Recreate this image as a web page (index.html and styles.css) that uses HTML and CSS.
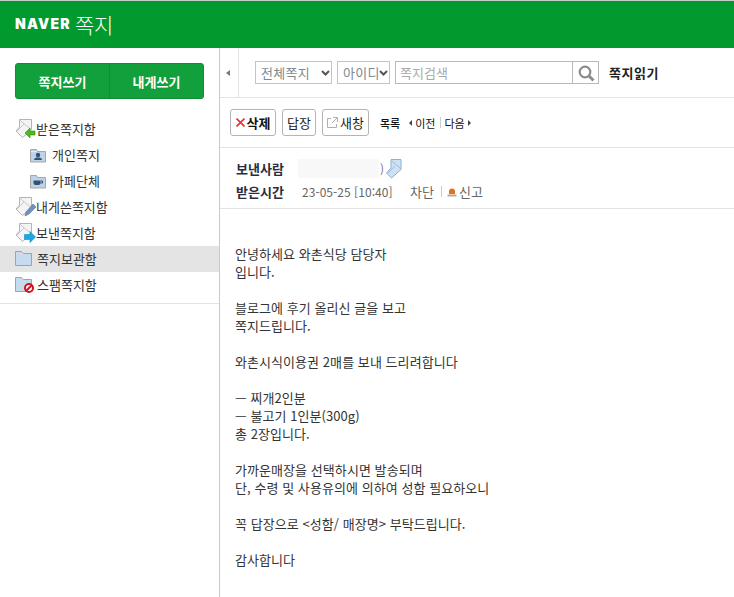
FILE: index.html
```html
<!DOCTYPE html>
<html lang="ko">
<head>
<meta charset="utf-8">
<title>NAVER 쪽지</title>
<link rel="stylesheet" href="styles.css">
</head>
<body>
<div class="page">
  <header class="header">
    <span class="logo">NAVER</span>
    <span class="service">쪽지</span>
  </header>
  <div class="main">
    <aside class="side">
      <div class="compose">
        <a class="compose-btn">쪽지쓰기</a>
        <a class="compose-btn">내게쓰기</a>
      </div>
      <ul class="folders">
        <li class="folder">
          <svg class="ico" width="21" height="22" viewBox="0 0 21 22">
            <path d="M4.500 1.500h12v10L7.500 19.500 1 13l3.500-4z" fill="#f4f4f4" stroke="#b4b4b4"/><path d="M4.500 2l11 9M2 13l7-7" stroke="#c8c8c8" fill="none"/>
            <path d="M10 15l5-5v3h5v4h-5v3z" fill="#4fb81b" stroke="#2f8f10" stroke-width=".6"/>
          </svg>
          <span class="lab">받은쪽지함</span>
        </li>
        <li class="folder sub">
          <svg class="ico-s" width="16" height="15" viewBox="0 0 16 15">
            <path d="M.5 14V1.500h6l1 2h8v10.500z" fill="#bcd3ea" stroke="#a6a6a6"/><path d="M1 3.500h6" stroke="#e8e8e8"/>
            <circle cx="8" cy="7" r="2.200" fill="#39506e"/><path d="M4 12c0-2 2-2.500 4-2.500s4 .5 4 2.500z" fill="#39506e"/>
          </svg>
          <span class="lab">개인쪽지</span>
        </li>
        <li class="folder sub">
          <svg class="ico-s" width="16" height="15" viewBox="0 0 16 15">
            <path d="M.5 14V1.500h6l1 2h8v10.500z" fill="#bcd3ea" stroke="#a6a6a6"/>
            <path d="M3.500 6.500h7v2.500q0 2-2 2h-3q-2 0-2-2z" fill="#39506e"/><path d="M10.500 7h2v2h-2" fill="none" stroke="#39506e"/>
          </svg>
          <span class="lab">카페단체</span>
        </li>
        <li class="folder">
          <svg class="ico" width="21" height="22" viewBox="0 0 21 22">
            <path d="M4.500 1.500h12v10L7.500 19.500 1 13l3.500-4z" fill="#f4f4f4" stroke="#b4b4b4"/><path d="M4.500 2l11 9M2 13l7-7" stroke="#c8c8c8" fill="none"/>
            <path d="M10 20l1-4 7-8 3 3-7 7z" fill="#6f93c4" stroke="#4d6f9f" stroke-width=".6"/>
          </svg>
          <span class="lab">내게쓴쪽지함</span>
        </li>
        <li class="folder">
          <svg class="ico" width="21" height="22" viewBox="0 0 21 22">
            <path d="M4.500 1.500h12v10L7.500 19.500 1 13l3.500-4z" fill="#f4f4f4" stroke="#b4b4b4"/><path d="M4.500 2l11 9M2 13l7-7" stroke="#c8c8c8" fill="none"/>
            <path d="M20.500 15L15 9.500v3H9.500v5H15v3z" fill="#1ca7e4" stroke="#1389c0" stroke-width=".6"/>
          </svg>
          <span class="lab">보낸쪽지함</span>
        </li>
        <li class="folder active">
          <svg class="ico" width="21" height="22" viewBox="0 0 21 22">
            <path d="M.500 17.500V3.500h6l2 2h8v12z" fill="#c6daf0" stroke="#a3a3a3"/><path d="M1 6h7" stroke="#dedede"/>
          </svg>
          <span class="lab wide">쪽지보관함</span>
        </li>
        <li class="folder">
          <svg class="ico" width="21" height="22" viewBox="0 0 21 22">
            <path d="M.500 17.500V3.500h6l2 2h8v12z" fill="#c6daf0" stroke="#a3a3a3"/>
            <circle cx="14" cy="14" r="4" fill="#fff" stroke="#d7121c" stroke-width="2"/><path d="M11 17l6-6" stroke="#d7121c" stroke-width="2"/>
          </svg>
          <span class="lab wide">스팸쪽지함</span>
        </li>
      </ul>
    </aside>
    <main class="content">
      <div class="searchbar">
        <div class="fold"><span class="fold-arrow"></span></div>
        <div class="search">
          <select class="sel sel-a"><option>전체쪽지</option></select>
          <select class="sel sel-b"><option>아이디</option></select>
          <div class="searchbox">
            <input class="q" placeholder="쪽지검색">
            <span class="go">
              <svg width="18" height="18" viewBox="0 0 18 18"><circle cx="8" cy="8" r="5.300" fill="none" stroke="#8c8c8c" stroke-width="2.200"/><path d="M12 12l4.500 4.500" stroke="#8c8c8c" stroke-width="3"/></svg>
            </span>
          </div>
          <strong class="pagetitle">쪽지읽기</strong>
        </div>
      </div>
      <div class="actions">
        <button class="btn btn-del"><svg width="9" height="9" viewBox="0 0 9 9"><path d="M.5.5l8 8M8.500.5l-8 8" stroke="#ee3030" stroke-width="1.600"/></svg>삭제</button>
        <button class="btn btn-reply">답장</button>
        <button class="btn btn-new"><svg width="11" height="11" viewBox="0 0 11 11"><path d="M4 1.500H.5v9h9V7M6 .5h4.500V5M10 1L5 6" fill="none" stroke="#b0b0b0"/></svg>새창</button>
        <nav class="nav">
          <a class="nav-list">목록</a>
          <a class="nav-item"><span class="tri-l"></span>이전</a>
          <span class="nav-sep"></span>
          <a class="nav-item">다음<span class="tri-r"></span></a>
        </nav>
      </div>
      <div class="meta">
        <div class="meta-row">
          <span class="meta-k">보낸사람</span>
          <span class="mask"></span><span class="paren">)</span>
          <svg class="sender-ico" width="17" height="20" viewBox="0 0 17 20"><path d="M5 .500h10v10L5.500 19 .5 14 5 9z" fill="#cfe0f2" stroke="#8fb0d3"/><path d="M5 1l10 9M2 14l7-7" stroke="#9fbcdb" fill="none"/></svg>
        </div>
        <div class="meta-row">
          <span class="meta-k">받은시간</span>
          <span class="date">23-05-25 [10:40]</span>
          <a class="block">차단</a>
          <span class="meta-sep"></span>
          <svg width="10" height="10" viewBox="0 0 10 10"><path d="M2 7V4.500a3 3 0 0 1 6 0V7z" fill="#e2711c"/><path d="M.5 7.500h9v2h-9z" fill="#b8a98c"/></svg>
          <a class="report">신고</a>
        </div>
      </div>
      <div class="body">
        <p>안녕하세요 와촌식당 담당자<br>입니다.</p>
        <p>블로그에 후기 올리신 글을 보고<br>쪽지드립니다.</p>
        <p>와촌시식이용권 2매를 보내 드리려합니다</p>
        <p>— 찌개2인분<br>— 불고기 1인분(300g)<br>총 2장입니다.</p>
        <p>가까운매장을 선택하시면 발송되며<br>단, 수령 및 사용유의에 의하여 성함 필요하오니</p>
        <p>꼭 답장으로 &lt;성함/ 매장명&gt; 부탁드립니다.</p>
        <p>감사합니다</p>
      </div>
    </main>
  </div>
</div>
</body>
</html>
```

FILE: styles.css
```css
* { box-sizing: border-box; }
html, body { margin: 0; padding: 0; background: #fff; }
body { font-family: "Noto Sans CJK KR", "Liberation Sans", sans-serif; font-size: 12px; color: #333; }
.page { width: 734px; height: 597px; overflow: hidden; display: flex; flex-direction: column; }

.header { height: 48px; flex: none; background: #009a2f; border-top: 1px solid #c9c9c9; display: flex; align-items: center; padding: 0 0 2px 15px; color: #fff; }
.logo { font-family: Inter, "Liberation Sans", sans-serif; font-weight: 900; font-size: 14px; letter-spacing: 1.2px; width: 60px; }
.service { font-size: 21px; font-weight: 300; line-height: 26px; letter-spacing: -.4px; }

.main { flex: 1; display: flex; min-height: 0; }
.side { width: 220px; flex: none; border-right: 1px solid #c9c9c9; }

.compose { margin: 15px 0 0 15px; width: 189px; height: 36px; display: flex; background: #12a03c; border: 1px solid #0b8f32; border-radius: 3px; }
.compose-btn { flex: 1; display: flex; align-items: center; justify-content: center; color: #fff; font-weight: 700; font-size: 13px; }
.compose-btn + .compose-btn { border-left: 1px solid #0b8f32; }

.folders { list-style: none; margin: 17px 0 0; padding: 0 0 5px; border-bottom: 1px solid #e3e3e3; }
.folder { height: 26px; display: flex; align-items: center; padding-left: 15px; font-size: 13px; color: #333; }
.folder.sub { padding-left: 30px; }
.folder.active { background: #e4e4e4; }
.ico { flex: none; }
.ico-s { flex: none; margin-right: 6px; }
.lab { line-height: 26px; }
.sub .lab { margin-top: -1px; }
.lab.wide { margin-left: 1px; }

.content { flex: 1; min-width: 0; display: flex; flex-direction: column; }

.searchbar { height: 50px; flex: none; display: flex; border-bottom: 1px solid #e3e3e3; }
.fold { width: 19px; flex: none; border-right: 1px solid #e3e3e3; display: flex; align-items: center; justify-content: center; }
.fold-arrow { width: 0; height: 0; border: 3.500px solid transparent; border-right: 4px solid #777; border-left: 0; margin-right: 2px; }
.search { flex: 1; display: flex; align-items: center; padding-left: 16px; }
.sel { height: 23px; border: 1px solid #c4c4c4; background: #fff url("data:image/svg+xml,%3Csvg xmlns='http://www.w3.org/2000/svg' width='9' height='6'%3E%3Cpath d='M1 1l3.500 3.500L8 1' fill='none' stroke='%23555' stroke-width='2'/%3E%3C/svg%3E") no-repeat right 1px center; appearance: none; font-family: "Noto Sans CJK KR", sans-serif; font-size: 13px; letter-spacing: .3px; color: #7d8a90; padding: 0 0 0 5px; border-radius: 0; margin: 0 5px 0 0; }
.sel-a { width: 77px; }
.sel-b { width: 53px; }
.searchbox { width: 204px; height: 23px; display: flex; border: 1px solid #b9b9b9; }
.q { flex: 1; min-width: 0; border: 0; outline: 0; padding: 0 4px; font-family: "Noto Sans CJK KR", sans-serif; font-size: 13px; background: #fff; }
.q::placeholder { color: #aaa; opacity: 1; }
.go { width: 26px; flex: none; border-left: 1px solid #b9b9b9; display: flex; align-items: center; justify-content: center; }
.pagetitle { margin-left: 10px; font-size: 13px; font-weight: 700; letter-spacing: .5px; color: #222; }

.actions { height: 50px; flex: none; border-bottom: 1px solid #e3e3e3; display: flex; align-items: center; padding: 0 0 0 10px; }
.btn { height: 27px; border: 1px solid #b4b4b4; border-radius: 3px; background: #fff; display: flex; align-items: center; justify-content: center; gap: 2px; font-family: "Noto Sans CJK KR", sans-serif; font-size: 13px; color: #222; padding: 0; margin: 0 6px 0 0; }
.btn-del { width: 46px; font-weight: 700; color: #111; }
.btn-reply { width: 34px; }
.btn-new { width: 47px; }
.nav { display: flex; align-items: center; margin-left: 5px; color: #111; font-size: 11px; }
.nav-list { margin-right: 9px; font-weight: 500; }
.nav-item { display: flex; align-items: center; gap: 3px; }
.nav-sep { width: 1px; height: 11px; background: #ccc; margin: 0 4px; }
.tri-l, .tri-r { width: 0; height: 0; border: 3px solid transparent; }
.tri-l { border-right: 3px solid #444; border-left: 0; }
.tri-r { border-left: 3px solid #444; border-right: 0; }

.meta { height: 61px; flex: none; border-bottom: 1px solid #e3e3e3; padding: 9px 0 0 16px; }
.meta-row { height: 23px; display: flex; align-items: center; }
.meta-k { width: 66px; font-weight: 700; font-size: 13px; color: #2c2c3c; flex: none; }
.mask { width: 81px; height: 19px; background: #f8f8f8; margin-left: -4px; flex: none; }
.paren { color: #777; margin: 0 2px 0 1px; }
.sender-ico { flex: none; }
.date { width: 108px; font-size: 12px; letter-spacing: .05px; color: #666; flex: none; }
.block { color: #666; font-size: 13px; }
.meta-sep { width: 1px; height: 11px; background: #ccc; margin: 0 5px 0 7px; }
.report { color: #666; font-size: 13px; margin-left: 2px; }

.body { padding: 36px 0 0 15px; font-size: 13px; letter-spacing: .06px; line-height: 18px; color: #333; }
.body p { margin: 0 0 18px; }
```
